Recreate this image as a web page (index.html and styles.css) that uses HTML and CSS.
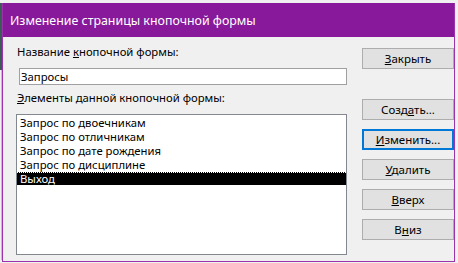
FILE: index.html
```html
<!DOCTYPE html>
<html lang="ru">
<head>
<meta charset="utf-8">
<title>Изменение страницы кнопочной формы</title>
<link rel="stylesheet" href="styles.css">
</head>
<body>
<div class="window">
  <div class="titlebar">Изменение страницы кнопочной формы</div>
  <div class="content">
    <div class="left">
      <div class="label">Название <u>к</u>нопочной формы:</div>
      <div class="input">Запросы</div>
      <div class="label label2"><u>Э</u>лементы данной кнопочной формы:</div>
      <div class="list">
        <div class="item">Запрос по двоечникам</div>
        <div class="item">Запрос по отличникам</div>
        <div class="item">Запрос по дате рождения</div>
        <div class="item">Запрос по дисциплине</div>
        <div class="item selected">Выход</div>
      </div>
    </div>
    <div class="buttons">
      <div class="btn close"><u>З</u>акрыть</div>
      <div class="btn create">Созд<u>а</u>ть...</div>
      <div class="btn focused"><u>И</u>зменить...</div>
      <div class="btn"><u>У</u>далить</div>
      <div class="btn"><u>В</u>верх</div>
      <div class="btn">В<u>н</u>из</div>
    </div>
  </div>
</div>
</body>
</html>
```

FILE: styles.css
```css
html, body {
  margin: 0;
  padding: 0;
}
body {
  width: 458px;
  height: 263px;
  overflow: hidden;
  background-color: #f0f0f0;
  background-image: linear-gradient(#3c5a56, #3c5a56), linear-gradient(#c4c4c4, #c4c4c4);
  background-size: 2px 67px, 1px 190px;
  background-position: 0 3px, 1px 70px;
  background-repeat: no-repeat;
  font-family: "Noto Sans", "Segoe UI", sans-serif;
  font-size: 11.3px;
  color: #000;
}
.window {
  margin: 3px 0 0 2px;
  width: 453px;
  height: 259px;
  box-sizing: border-box;
  border: 1px solid #9c33ad;
  border-top: none;
  background: #f0f0f0;
  display: flex;
  flex-direction: column;
  overflow: hidden;
}
.titlebar {
  height: 34px;
  flex: none;
  background: #88199a;
  color: #fff;
  font-size: 12.4px;
  display: flex;
  align-items: center;
  padding-left: 8px;
  margin: 0 -1px;
}
.content {
  display: flex;
  padding: 7px 0 0 13px;
  gap: 15px;
}
.left {
  width: 332px;
  display: flex;
  flex-direction: column;
}
.label {
  height: 16px;
  line-height: 16px;
  padding-left: 1px;
}
.input {
  margin: 8px 0 0 3px;
  height: 15px;
  line-height: 15px;
  border: 1px solid #a0a0a0;
  background: #fff;
  padding-left: 1px;
}
.label2 {
  margin-top: 5px;
}
.list {
  margin-top: 8px;
  height: 139px;
  border: 1px solid #828790;
  background: #fff;
  padding-top: 1px;
  box-sizing: border-box;
  height: 141px;
}
.item {
  height: 14px;
  line-height: 14px;
  padding-left: 3px;
  white-space: nowrap;
}
.item.selected {
  background: #000;
  color: #fff;
  box-sizing: border-box;
  border-top: 1px dotted #fff;
  line-height: 12px;
  height: 13px;
}
.buttons {
  display: flex;
  flex-direction: column;
  gap: 9px;
  padding-top: 4px;
}
.btn {
  width: 90px;
  height: 19px;
  line-height: 19px;
  border: 1px solid #adadad;
  background: #e1e1e1;
  text-align: center;
  flex: none;
  font-size: 11.5px;
}
.btn.close {
  margin-bottom: 21px;
}
.btn.focused {
  border: 2px solid #0078d7;
  height: 17px;
  line-height: 17px;
  width: 88px;
}
```
